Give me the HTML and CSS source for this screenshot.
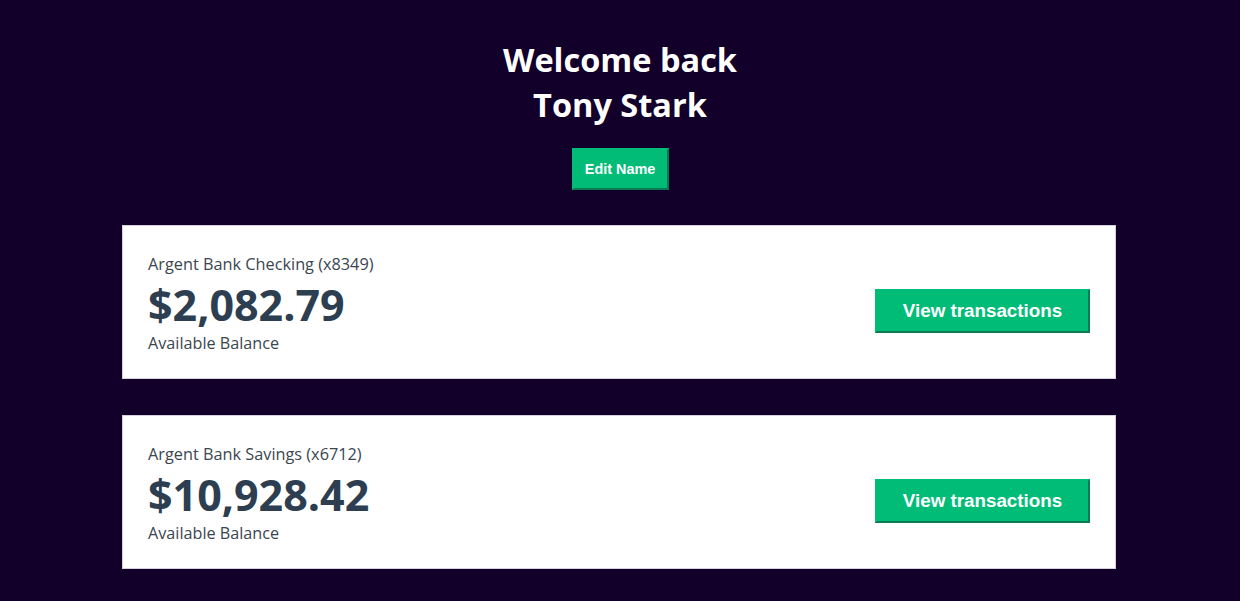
FILE: index.html
```html
<!DOCTYPE html>
<html lang="en">
<head>
<meta charset="utf-8">
<title>Argent Bank - User</title>
<link rel="stylesheet" href="styles.css">
</head>
<body>
<main class="main bg-dark">
  <div class="header">
    <h1 class="welcome">Welcome back<br>Tony Stark</h1>
    <button class="edit-button">Edit Name</button>
  </div>
  <section class="account">
    <div class="account-content">
      <h3 class="account-title">Argent Bank Checking (x8349)</h3>
      <p class="account-amount">$2,082.79</p>
      <p class="account-amount-description">Available Balance</p>
    </div>
    <div class="account-cta">
      <button class="transaction-button">View transactions</button>
    </div>
  </section>
  <section class="account">
    <div class="account-content">
      <h3 class="account-title">Argent Bank Savings (x6712)</h3>
      <p class="account-amount">$10,928.42</p>
      <p class="account-amount-description">Available Balance</p>
    </div>
    <div class="account-cta">
      <button class="transaction-button">View transactions</button>
    </div>
  </section>
</main>
</body>
</html>
```

FILE: styles.css
```css
html, body {
  margin: 0;
  padding: 0;
}
body {
  font-family: "Open Sans", "Noto Sans", Arial, sans-serif;
  background: #12002b;
  color: #2c3e50;
}
.main {
  height: 601px;
  overflow: hidden;
  padding-top: 37px;
  box-sizing: border-box;
}
.header {
  display: flex;
  flex-direction: column;
  align-items: center;
  color: #fff;
  margin-bottom: 35px;
}
.welcome {
  margin: 0 0 21px;
  font-size: 32.5px;
  line-height: 45px;
  font-weight: 700;
  text-align: center;
}
.edit-button {
  width: 97px;
  height: 42px;
  box-sizing: border-box;
  background: #00bc77;
  border: 2px solid #00bc77;
  border-right-color: #0a7a52;
  border-bottom-color: #0a7a52;
  color: #fff;
  font-family: "Liberation Sans", Arial, sans-serif;
  font-weight: 700;
  font-size: 14.4px;
  padding: 0;
}
.account {
  display: flex;
  justify-content: space-between;
  align-items: center;
  width: 994px;
  height: 154px;
  box-sizing: border-box;
  margin: 0 0 36px 122px;
  background: #fff;
  border: 1px solid #d4d2da;
  padding: 0 25px;
}
.account-content {
  display: flex;
  flex-direction: column;
}
.account-title {
  margin: 0;
  font-size: 16.3px;
  font-weight: 400;
  line-height: 22px;
  color: #3b4650;
}
.account-amount {
  margin: 0;
  font-size: 43px;
  font-weight: 700;
  line-height: 60px;
  color: #2c3e50;
}
.account-amount-description {
  margin: 0;
  font-size: 16.2px;
  line-height: 16px;
  color: #3b4650;
}
.account-cta {
  margin-top: 18px;
}
.transaction-button {
  width: 215px;
  height: 44px;
  box-sizing: border-box;
  background: #00bc77;
  border: 2px solid #00bc77;
  border-right-color: #0a7a52;
  border-bottom-color: #0a7a52;
  color: #fff;
  font-family: "Liberation Sans", Arial, sans-serif;
  font-weight: 700;
  font-size: 18.8px;
  padding: 0;
}
```
